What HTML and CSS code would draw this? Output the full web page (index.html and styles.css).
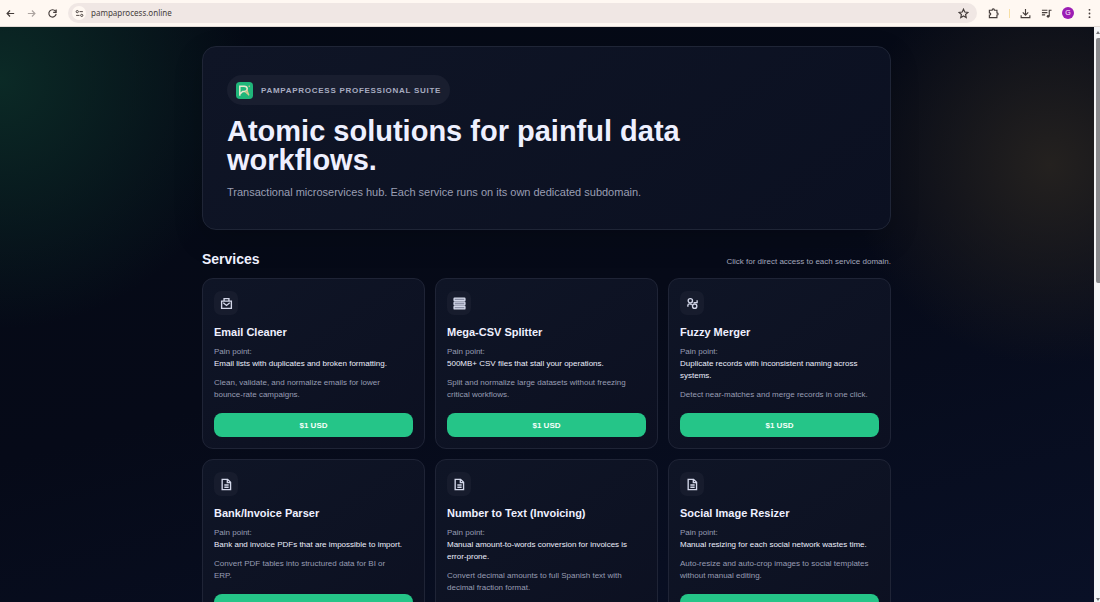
FILE: index.html
```html
<!DOCTYPE html>
<html lang="en">
<head>
<meta charset="utf-8">
<title>Pampaprocess</title>
<link rel="stylesheet" href="styles.css">
</head>
<body>
<svg class="sprite" aria-hidden="true">
  <symbol id="doc" viewBox="0 0 24 24"><path d="M4 2.500h10l5.500 5.500v13.500H4zM13.500 2.500v6H19.500M8 13h8M8 17h8"/></symbol>
</svg>
<header class="toolbar">
  <button class="tool" aria-label="Back"><svg viewBox="0 0 24 24"><path d="M20 12H5M11 5.500L4.500 12l6.500 6.500"/></svg></button>
  <button class="tool tool-off" aria-label="Forward" disabled><svg viewBox="0 0 24 24"><path d="M4 12h15M13 5.500l6.500 6.500-6.500 6.500"/></svg></button>
  <button class="tool" aria-label="Reload"><svg viewBox="0 0 24 24"><path d="M18.500 7A8 8 0 1 0 20 13M20 3v6.500h-6.500"/></svg></button>
  <div class="omnibox">
    <button class="site" aria-label="Site information"><svg viewBox="0 0 24 24"><circle cx="6" cy="7" r="3"/><path d="M12 7h9M3 17h9"/><circle cx="18" cy="17" r="3"/></svg></button>
    <input class="url" type="text" aria-label="Address" value="pampaprocess.online">
    <button class="tool" aria-label="Bookmark"><svg viewBox="0 0 24 24"><path d="M12 2.500l2.800 6.300 6.900.700-5.200 4.600 1.500 6.800-6-3.600-6 3.600 1.500-6.800-5.200-4.600 6.900-.700z"/></svg></button>
  </div>
  <button class="tool tool-ext" aria-label="Extensions"><svg viewBox="0 0 24 24"><path d="M3 5h6c0-4 5-4 5 0h5.500v5.500c3.500 0 3.500 5 0 5V21H3v-5.500c4 0 4-5 0-5z"/></svg></button>
  <span class="divider"></span>
  <button class="tool" aria-label="Downloads"><svg viewBox="0 0 24 24"><path d="M12 2v13M6 9.500l6 6 6-6M2.500 16v5h19v-5"/></svg></button>
  <button class="tool" aria-label="Media"><svg viewBox="0 0 24 24"><path d="M2 5h12M2 10h12M2 15h7M18 18V5h5"/><circle class="fill" cx="15.500" cy="18" r="3"/></svg></button>
  <button class="avatar" aria-label="Profile">G</button>
  <button class="tool" aria-label="Menu"><svg viewBox="0 0 24 24"><g class="fill"><circle cx="12" cy="4" r="2"/><circle cx="12" cy="12" r="2"/><circle cx="12" cy="20" r="2"/></g></svg></button>
</header>
<div class="viewport">
  <main class="page">
    <div class="container">
      <section class="hero">
        <div class="badge">
          <svg class="logo" viewBox="0 0 18 18"><rect width="18" height="18" rx="4" fill="#20b67a" stroke="none"/><path d="M4 14.500V4.500h4.500c4.500 0 4.500 5.500 0 5.500H7L4 13" stroke="#e8e8cf" stroke-width="1.600"/><path d="M9.500 10l4.500 4M11.500 8l2 6M13.500 4l1 1" stroke="#d9c58e" stroke-width="1.300"/></svg>
          <span>PAMPAPROCESS PROFESSIONAL SUITE</span>
        </div>
        <h1>Atomic solutions for painful data workflows.</h1>
        <p>Transactional microservices hub. Each service runs on its own dedicated subdomain.</p>
      </section>
      <div class="section-head">
        <h2>Services</h2>
        <p>Click for direct access to each service domain.</p>
      </div>
      <section class="grid">
        <article class="card">
          <span class="icon"><svg viewBox="0 0 24 24"><path d="M3 7.500h18V21H3zM7.500 7V3h9v4M6 10.500l6 5 6-5"/></svg></span>
          <h3>Email Cleaner</h3>
          <p class="pain">Pain point:<br><span>Email lists with duplicates and broken formatting.</span></p>
          <p>Clean, validate, and normalize emails for lower bounce-rate campaigns.</p>
          <a class="buy" href="#">$1 USD</a>
        </article>
        <article class="card">
          <span class="icon"><svg viewBox="0 0 24 24"><g fill="#8b90a6"><rect x="2" y="2" width="20" height="5" rx="1"/><rect x="2" y="9.500" width="20" height="5" rx="1"/><rect x="2" y="17" width="20" height="5" rx="1"/></g></svg></span>
          <h3>Mega-CSV Splitter</h3>
          <p class="pain">Pain point:<br><span>500MB+ CSV files that stall your operations.</span></p>
          <p>Split and normalize large datasets without freezing critical workflows.</p>
          <a class="buy" href="#">$1 USD</a>
        </article>
        <article class="card">
          <span class="icon"><svg viewBox="0 0 24 24"><circle cx="8" cy="7" r="4"/><circle cx="16" cy="17" r="4"/><path d="M3.500 18v-3c0-3 6-3 7 0M14 10.500h6.500V6"/></svg></span>
          <h3>Fuzzy Merger</h3>
          <p class="pain">Pain point:<br><span>Duplicate records with inconsistent naming across systems.</span></p>
          <p>Detect near-matches and merge records in one click.</p>
          <a class="buy" href="#">$1 USD</a>
        </article>
        <article class="card">
          <span class="icon"><svg><use href="#doc"/></svg></span>
          <h3>Bank/Invoice Parser</h3>
          <p class="pain">Pain point:<br><span>Bank and invoice PDFs that are impossible to import.</span></p>
          <p>Convert PDF tables into structured data for BI or ERP.</p>
          <a class="buy" href="#">$1 USD</a>
        </article>
        <article class="card">
          <span class="icon"><svg><use href="#doc"/></svg></span>
          <h3>Number to Text (Invoicing)</h3>
          <p class="pain">Pain point:<br><span>Manual amount-to-words conversion for invoices is error-prone.</span></p>
          <p>Convert decimal amounts to full Spanish text with decimal fraction format.</p>
          <a class="buy" href="#">$1 USD</a>
        </article>
        <article class="card">
          <span class="icon"><svg><use href="#doc"/></svg></span>
          <h3>Social Image Resizer</h3>
          <p class="pain">Pain point:<br><span>Manual resizing for each social network wastes time.</span></p>
          <p>Auto-resize and auto-crop images to social templates without manual editing.</p>
          <a class="buy" href="#">$1 USD</a>
        </article>
      </section>
    </div>
  </main>
  <div class="scrollbar">
    <span class="arrow arrow-up"></span>
    <span class="track"><span class="thumb"></span></span>
    <span class="arrow arrow-down"></span>
  </div>
</div>
</body>
</html>
```
FILE: styles.css
```css
* { box-sizing: border-box; }
body {
  margin: 0;
  height: 100vh;
  display: flex;
  flex-direction: column;
  overflow: hidden;
  font-family: "Liberation Sans", Arial, sans-serif;
  color: #eef0ff;
}
h1, h2, h3, p { margin: 0; }
button, input { border: 0; padding: 0; background: none; font: inherit; color: inherit; }
svg { fill: none; stroke: currentColor; stroke-width: 2.5; }
.sprite { display: none; }
.fill { fill: currentColor; stroke: none; }

.toolbar {
  flex: none;
  height: 27px;
  padding: 0 5px;
  display: flex;
  align-items: center;
  gap: 10px;
  background: #fff8f2;
  border-bottom: 1px solid #e2dad5;
  color: #453d3b;
}
.tool { flex: none; width: 11px; height: 11px; display: flex; }
.tool svg { width: 11px; height: 11px; }
.tool-off { color: #aca4a0; }
.tool-ext { margin-left: 1px; }
.omnibox {
  flex: 1;
  height: 20px;
  padding: 0 8px 0 4px;
  display: flex;
  align-items: center;
  gap: 5px;
  border-radius: 10px;
  background: #f0e7e4;
}
.site {
  width: 14px;
  height: 14px;
  display: grid;
  place-items: center;
  border-radius: 50%;
  background: #fff8f2;
}
.site svg { width: 9px; height: 9px; }
.url { flex: 1; min-width: 0; font: 8px/14px "Noto Sans", sans-serif; }
.divider { width: 1px; height: 9px; background: #f7dfa5; }
.avatar {
  flex: none;
  width: 12px;
  height: 12px;
  border-radius: 50%;
  background: #9c1db4;
  color: #fff;
  font-size: 7px;
  line-height: 12px;
}

.viewport { flex: 1; min-height: 0; display: flex; }
.page {
  flex: 1;
  overflow: hidden;
  padding: 19px 21px 0 20px;
  background:
    radial-gradient(circle at 0 9%, #0b2a26 0, rgba(11, 42, 38, 0) 250px),
    radial-gradient(circle at 96% 24%, #24211f 0, rgba(36, 33, 31, 0) 200px),
    linear-gradient(165deg, #050a15 0, #060a18 50%, #091026 100%);
}
.container { max-width: 689px; margin: 0 auto; }
.hero {
  padding: 28px 24px;
  border: 1px solid #1f2536;
  border-radius: 14px;
  background: linear-gradient(145deg, #0f1526, #0b1021);
  box-shadow: 0 10px 30px rgba(0, 0, 0, .15);
}
.badge {
  width: fit-content;
  height: 30px;
  padding: 0 9px;
  display: flex;
  align-items: center;
  gap: 8px;
  border-radius: 15px;
  background: #191e2f;
  color: #a7abc0;
  font-size: 8px;
  font-weight: 700;
  letter-spacing: 0.09em;
}
.logo { width: 17px; height: 17px; }
h1 { max-width: 500px; margin-top: 12px; font-size: 29px; line-height: 29px; }
.hero p { margin-top: 8px; font-size: 11px; line-height: 18px; color: #9a9eb3; }

.section-head {
  margin: 20px 0 10px;
  display: flex;
  justify-content: space-between;
  align-items: flex-end;
}
h2 { font-size: 14px; line-height: 18px; }
.section-head p { font-size: 8px; line-height: 12px; color: #a3a7bc; }

.grid { display: grid; grid-template-columns: repeat(3, 1fr); gap: 10px; }
.card {
  padding: 12px 11px 11px;
  border: 1px solid #1f2436;
  border-radius: 11px;
  background: linear-gradient(145deg, #0f1526, #0c1021);
}
.icon {
  width: 24px;
  height: 24px;
  display: grid;
  place-items: center;
  border-radius: 7px;
  background: #171c2d;
  color: #d3d7e9;
}
.icon svg { width: 13px; height: 13px; }
h3 { margin: 10px 0 7px; font-size: 11px; line-height: 14px; }
.card p { margin-bottom: 7px; padding-right: 9px; font-size: 8px; line-height: 12px; color: #989db3; }
.pain span { color: #eceefc; }
.buy {
  height: 24px;
  margin-top: 12px;
  display: grid;
  place-items: center;
  border-radius: 8px;
  background: #25c588;
  color: #f5fff9;
  font-size: 8px;
  font-weight: 700;
  text-decoration: none;
}

.scrollbar {
  flex: none;
  width: 6px;
  padding: 4px 0 1px;
  display: flex;
  flex-direction: column;
  align-items: flex-end;
  gap: 4px;
  background: #f5f5f6;
}
.track { flex: 1; width: 4px; }
.thumb { display: block; height: 44%; border-radius: 2px 0 0 2px; background: #8b8b8e; }
.arrow { border: 2px solid transparent; }
.arrow-up { border-top: 0; border-bottom: 3px solid #77777a; }
.arrow-down { border-bottom: 0; border-top: 3px solid #77777a; }
```
